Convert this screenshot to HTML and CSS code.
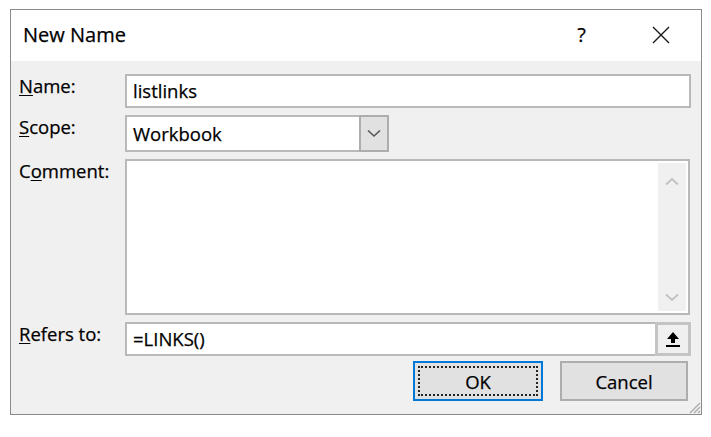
FILE: index.html
```html
<!DOCTYPE html>
<html lang="en">
<head>
  <meta charset="UTF-8" />
  <title>New Name</title>
  <link rel="stylesheet" href="styles.css">
</head>
<body>

  <div class="dialog">
    <!-- Title bar -->
    <div class="titlebar">
      <span class="title">New Name</span>
      <span class="help">?</span>
      <svg class="close" width="18" height="18" viewBox="0 0 18 18">
        <path d="M1 1 L17 17 M17 1 L1 17" stroke="#1a1a1a" stroke-width="1.4" fill="none"/>
      </svg>
    </div>

    <div class="content">
      <div class="row name-row">
        <label><u>N</u>ame:</label>
        <div class="field textbox">listlinks</div>
      </div>

      <div class="row scope-row">
        <label><u>S</u>cope:</label>
        <div class="field select">
          <span class="select-text">Workbook</span>
          <span class="select-btn">
            <svg width="14" height="9" viewBox="0 0 14 9">
              <path d="M1 1.5 L7 7 L13 1.5" stroke="#555" stroke-width="1.6" fill="none"/>
            </svg>
          </span>
        </div>
      </div>

      <div class="row comment-row">
        <label>C<u>o</u>mment:</label>
        <div class="field textarea">
          <div class="scrollbar">
            <svg width="14" height="9" viewBox="0 0 14 9">
              <path d="M1 7.5 L7 2 L13 7.5" stroke="#c2c2c2" stroke-width="1.8" fill="none"/>
            </svg>
            <svg width="14" height="9" viewBox="0 0 14 9">
              <path d="M1 1.5 L7 7 L13 1.5" stroke="#c2c2c2" stroke-width="1.8" fill="none"/>
            </svg>
          </div>
        </div>
      </div>

      <div class="row refers-row">
        <label><u>R</u>efers to:</label>
        <div class="field textbox refers">
          <span class="refers-text">=LINKS()</span>
          <span class="collapse-btn">
            <svg width="16" height="18" viewBox="0 0 16 18">
              <path d="M8 2 L2 9 L6 9 L6 13 L10 13 L10 9 L14 9 Z" fill="#000"/>
              <rect x="1" y="15" width="14" height="2" fill="#000"/>
            </svg>
          </span>
        </div>
      </div>

      <div class="buttons">
        <button class="btn ok"><span class="focus">OK</span></button>
        <button class="btn cancel">Cancel</button>
      </div>
    </div>

    <svg class="grip" width="14" height="14" viewBox="0 0 14 14">
      <path d="M13 3 L3 13 M13 7 L7 13 M13 11 L11 13" stroke="#a8a8a8" stroke-width="1.2" fill="none"/>
    </svg>
  </div>

</body>
</html>
```

FILE: styles.css
```css
* { box-sizing: border-box; }

body {
  margin: 0;
  background: #fff;
  font-family: 'Open Sans', 'Noto Sans', sans-serif;
  color: #000;
  -webkit-text-stroke: 0.25px #000;
}

.dialog {
  position: relative;
  margin: 9px 0 0 10px;
  width: 692px;
  height: 406px;
  border: 1px solid #8a8a8a;
  background: #f0f0f0;
  display: flex;
  flex-direction: column;
}

.titlebar {
  height: 51px;
  background: #fff;
  display: flex;
  align-items: center;
  padding: 0 0 0 12px;
}

.title {
  font-size: 20px;
  flex: 1;
  margin-top: -2px;
}

.help {
  font-size: 20px;
  margin-right: 66px;
  margin-top: -2px;
}

.close {
  margin-right: 31px;
  margin-top: -1px;
}

.content {
  flex: 1;
  padding: 13px 10px 0 8px;
  display: flex;
  flex-direction: column;
  gap: 7px;
}

.row {
  display: flex;
  align-items: flex-start;
}

.row label {
  width: 106px;
  font-size: 18.5px;
  line-height: 24px;
  padding-top: 0;
}

.row label u {
  text-underline-offset: 2px;
}

.field {
  background: #fff;
  border: 2px solid #b9b9b9;
  font-size: 18.5px;
}

.textbox {
  width: 566px;
  height: 34px;
  padding: 2px 6px;
  line-height: 26px;
}

.select {
  width: 264px;
  height: 37px;
  display: flex;
  align-items: stretch;
}

.select-text {
  flex: 1;
  padding: 4px 6px;
  line-height: 26px;
}

.select-btn {
  width: 30px;
  margin: -2px -2px -2px 0;
  background: #e1e1e1;
  border: 2px solid #adadad;
  display: flex;
  align-items: center;
  justify-content: center;
}

.textarea {
  width: 565px;
  height: 156px;
  display: flex;
  justify-content: flex-end;
  padding: 2px;
}

.scrollbar {
  width: 28px;
  background: #f0f0f0;
  display: flex;
  flex-direction: column;
  justify-content: space-between;
  align-items: center;
  padding: 14px 0 9px;
}

.refers {
  display: flex;
  align-items: stretch;
  padding: 0;
}

.refers-text {
  flex: 1;
  padding: 2px 6px;
}

.collapse-btn {
  width: 36px;
  margin: -2px -2px -2px 0;
  background: #f0f0f0;
  border: 3px solid #c4c4c4;
  display: flex;
  align-items: center;
  justify-content: center;
}

.buttons {
  display: flex;
  justify-content: flex-end;
  gap: 17px;
  margin-top: -2px;
  padding-right: 3px;
}

.btn {
  width: 130px;
  height: 40px;
  background: #e1e1e1;
  border: 2px solid #adadad;
  font-family: 'Open Sans', 'Noto Sans', sans-serif;
  font-size: 18.5px;
  color: #000;
  padding: 0;
}

.btn.cancel {
  width: 128px;
}

.btn.ok {
  border-color: #0078d7;
  padding: 3px;
}

.btn.ok .focus {
  display: flex;
  height: 100%;
  align-items: center;
  justify-content: center;
  border: 2px dotted #222;
}

.grip {
  position: absolute;
  right: 0;
  bottom: 0;
}
```
